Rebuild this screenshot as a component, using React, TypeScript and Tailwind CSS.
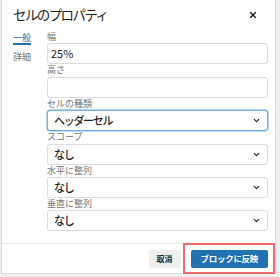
import { ChevronDown, X } from "lucide-react";

const FIELDS = [
  { label: "幅", kind: "input", value: "25%" },
  { label: "高さ", kind: "input", value: "" },
  { label: "セルの種類", kind: "select", value: "ヘッダーセル", focus: true },
  { label: "スコープ", kind: "select", value: "なし" },
  { label: "水平に整列", kind: "select", value: "なし" },
  { label: "垂直に整列", kind: "select", value: "なし" },
];

export default function App() {
  return (
    <div className="h-[277px] w-[280px] overflow-hidden bg-[#f0f0f1] pl-[1px] font-['Noto_Sans_CJK_JP','Noto_Sans',sans-serif]">
      <div className="flex h-[274px] w-[275px] flex-col border border-t-0 border-[#dcdcde] bg-white">
        <div className="flex h-[30px] items-center justify-between pl-[11px] pr-[17px]">
          <h1 className="text-[13.5px] leading-none tracking-[-1.6px] text-[#1e1e1e]">セルのプロパティ</h1>
          <X size={10} strokeWidth={3.2} className="text-[#1e1e1e]" />
        </div>

        <div className="flex flex-1 pl-[11px] pr-[7px]">
          <div className="flex w-[34px] flex-col pt-[3px] text-[9px]">
            <span className="w-fit border-b-2 border-[#2271b1] leading-[10px] text-[#2271b1]">一般</span>
            <span className="mt-[7px] leading-[10px] text-[#757575]">詳細</span>
          </div>
          <div className="flex flex-1 flex-col pt-[1px]">
            {FIELDS.map((f) => (
              <div key={f.label} className="flex flex-col">
                <span className="mb-[1.4px] text-[9px] leading-[11px] text-[#757575]">{f.label}</span>
                <div
                  className={`flex h-[21px] items-center justify-between rounded-[3px] border bg-white pr-[6px] text-[11px] text-[#1e1e1e] ${
                    f.focus ? "border-[#72aee6] shadow-[0_0_0_0.5px_#72aee6]" : "border-[#dcdcde]"
                  } ${f.kind === "input" ? "pl-[3px]" : "pl-[6px]"}`}
                >
                  <span className={`leading-none ${f.kind === "select" ? "font-medium tracking-[-1.3px]" : ""}`}>{f.value}</span>
                  {f.kind === "select" && <ChevronDown size={9} strokeWidth={3} className="text-[#1e1e1e]" />}
                </div>
              </div>
            ))}
          </div>
        </div>

        <div className="mt-auto flex h-[30px] items-center justify-end gap-[10px] border-t border-[#e6e6e6] pr-[7px]">
          <button className="h-[18px] rounded-[2px] bg-[#f0f0f0] px-[8px] text-[8px] font-bold leading-none text-[#1e1e1e]">
            取消
          </button>
          <div className="relative flex">
            <button className="h-[18px] rounded-[2px] bg-[#2271b1] px-[10px] text-[8.5px] font-bold leading-none tracking-[-0.3px] text-white">
              ブロックに反映
            </button>
            <div className="pointer-events-none absolute -bottom-[6px] -left-[8px] -right-[7px] -top-[7px] border-2 border-[#f06b6b]" />
          </div>
        </div>
      </div>
    </div>
  );
}
